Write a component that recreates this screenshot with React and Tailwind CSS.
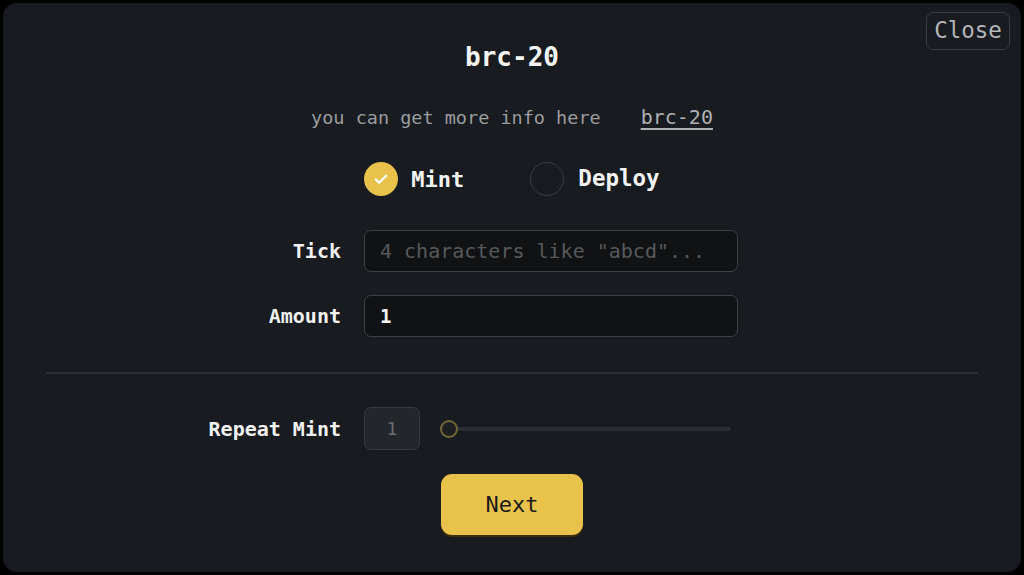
import React from "react";

const mono = { fontFamily: '"DejaVu Sans Mono", "Liberation Mono", monospace' };

export default function App() {
  return (
    <div className="h-[575px] w-[1024px] overflow-hidden bg-black p-[3px]" style={mono}>
      <div className="relative flex h-full flex-col items-stretch rounded-[14px] bg-[#181b1f]">
        <button className="absolute right-[11px] top-[9px] flex h-[38px] w-[84px] items-center justify-center rounded-[7px] border border-[#3a3e44] text-[22.5px] text-[#b4b6b9]">
          Close
        </button>

        <h1 className="mt-[38px] text-center text-[26px] font-bold leading-[32px] text-[#f4f4f4]">brc-20</h1>

        <p className="mt-[32px] text-center text-[18.5px] leading-[24px] text-[#9b9d9f]">
          you can get more info here
          <span className="ml-[40px] text-[20px] text-[#aeb0b2] underline underline-offset-4">brc-20</span>
        </p>

        <div className="mt-[32px] flex items-center justify-center gap-[66px]">
          <div className="flex items-center gap-[13px]">
            <span className="flex h-[34px] w-[34px] items-center justify-center rounded-full bg-[#e9c24b]">
              <svg width="18" height="18" viewBox="0 0 24 24" fill="none" stroke="#ffffff" strokeWidth="3" strokeLinecap="round" strokeLinejoin="round">
                <path d="M5 12.5l4.5 4.5L19 7.5" />
              </svg>
            </span>
            <span className="text-[22px] font-bold text-[#f4f4f4]">Mint</span>
          </div>
          <div className="flex items-center gap-[14px]">
            <span className="h-[34px] w-[34px] rounded-full border border-[#3a3e44]"></span>
            <span className="text-[22.5px] font-bold text-[#f4f4f4]">Deploy</span>
          </div>
        </div>

        <div className="mt-[34px] grid grid-cols-[338px_374px] items-center gap-x-[23px] gap-y-[23px]">
          <label className="text-right text-[20px] font-bold text-[#f2f2f2]">Tick</label>
          <div className="flex h-[42px] items-center rounded-[7px] border border-[#3d4045] bg-[#111213] px-[15px] text-[20px] text-[#56595c]">
            4 characters like "abcd"...
          </div>
          <label className="text-right text-[20px] font-bold text-[#f2f2f2]">Amount</label>
          <div className="flex h-[42px] items-center rounded-[7px] border border-[#3d4045] bg-[#111213] px-[15px] text-[19px] font-bold text-[#f2f2f2]">
            1
          </div>
        </div>

        <div className="mx-[43px] mt-[35px] h-[2px] bg-[#2c2f33]"></div>

        <div className="mt-[33px] grid grid-cols-[338px_auto] items-center gap-x-[23px]">
          <label className="text-right text-[20px] font-bold text-[#f2f2f2]">Repeat Mint</label>
          <div className="flex items-center">
            <div className="flex h-[43px] w-[56px] items-center justify-center rounded-[7px] border border-[#383c41] bg-[#23272c] text-[18px] text-[#6a6d70]">
              1
            </div>
            <div className="relative ml-[20px] flex h-[18px] w-[291px] items-center">
              <div className="ml-[9px] h-[4px] flex-1 rounded-full bg-[#2a2e33]"></div>
              <span className="absolute left-0 top-0 h-[18px] w-[18px] rounded-full border-2 border-[#716737] bg-[#1d1f22]"></span>
            </div>
          </div>
        </div>

        <div className="mt-[24px] flex justify-center">
          <button className="flex h-[61px] w-[142px] items-center justify-center rounded-[11px] bg-[#e9c24b] text-[22px] text-[#1a1a1a] shadow-[0_2px_0_#3a2e0c]">
            Next
          </button>
        </div>
      </div>
    </div>
  );
}
